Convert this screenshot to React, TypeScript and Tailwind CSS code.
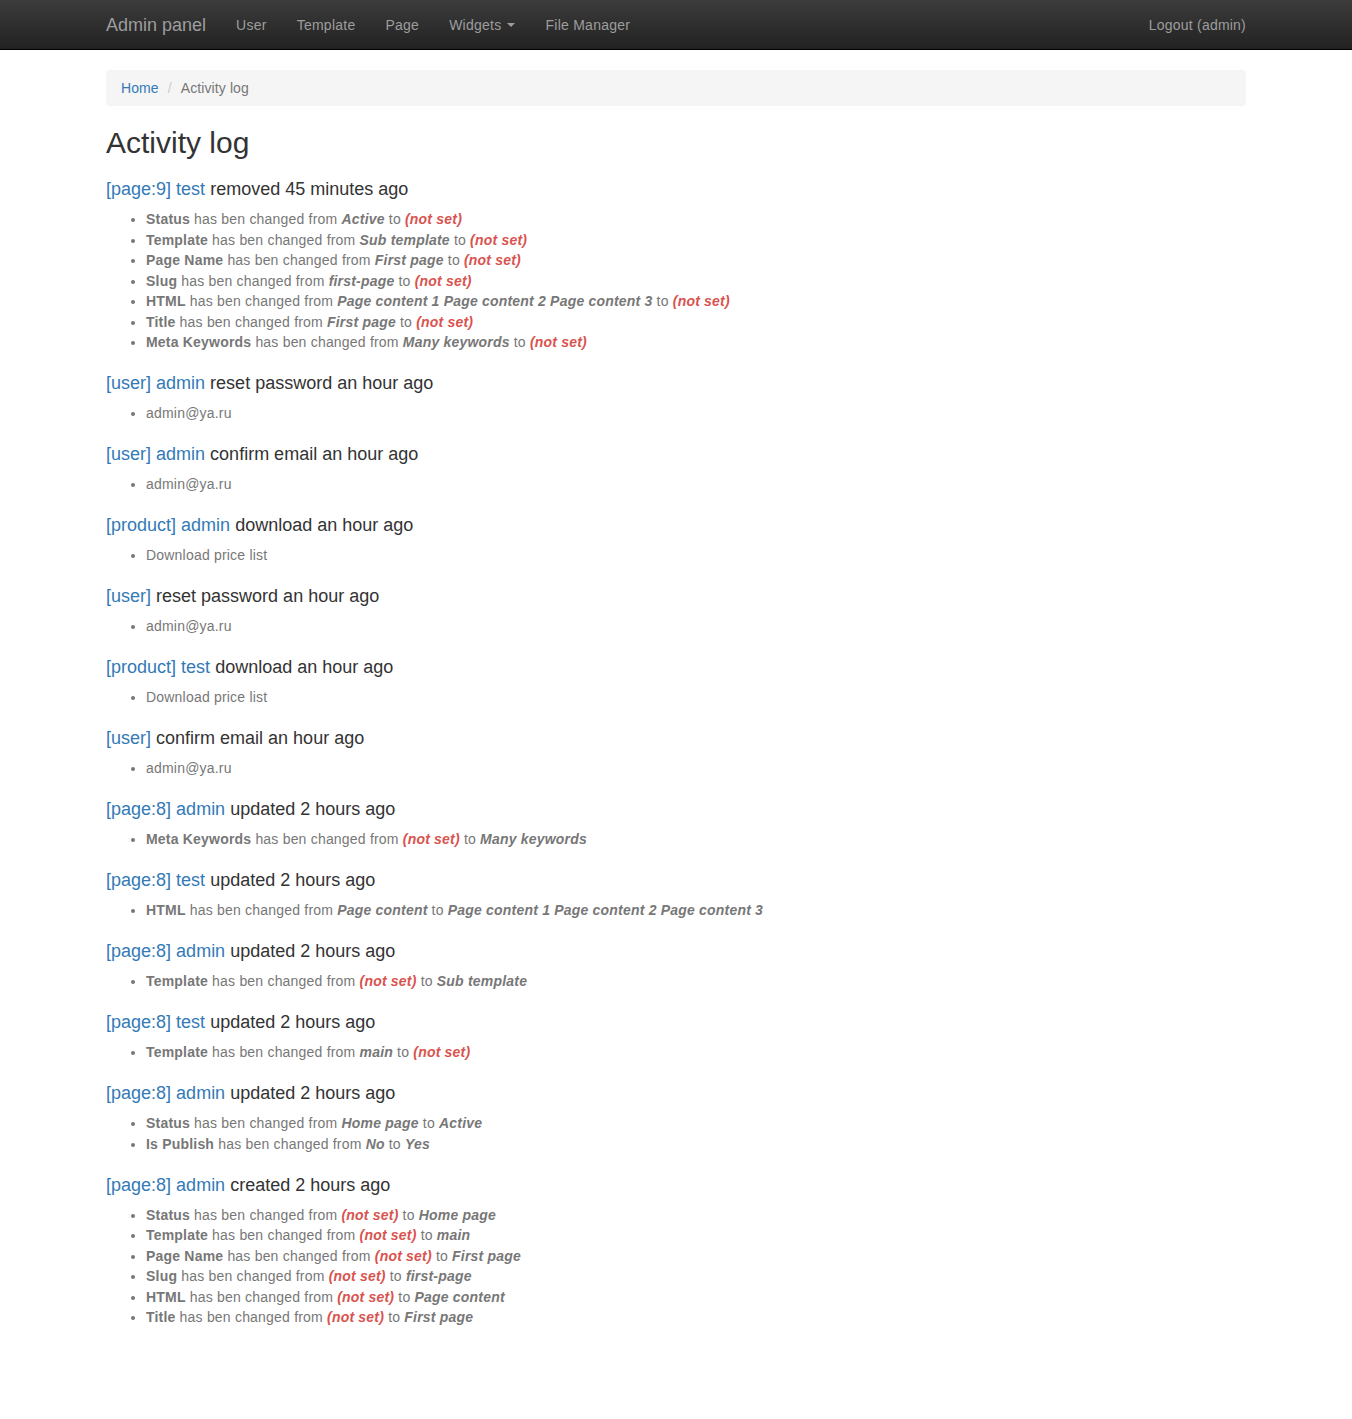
import React from "react"

type Change = { attr: string; from: string | null; to: string | null }
type Entry = { model: string; user?: string; action: string; changes?: Change[]; note?: string }

const entries: Entry[] = [
  {
    model: "page:9",
    user: "test",
    action: "removed 45 minutes ago",
    changes: [
      { attr: "Status", from: "Active", to: null },
      { attr: "Template", from: "Sub template", to: null },
      { attr: "Page Name", from: "First page", to: null },
      { attr: "Slug", from: "first-page", to: null },
      { attr: "HTML", from: "Page content 1 Page content 2 Page content 3", to: null },
      { attr: "Title", from: "First page", to: null },
      { attr: "Meta Keywords", from: "Many keywords", to: null },
    ],
  },
  { model: "user", user: "admin", action: "reset password an hour ago", note: "admin@ya.ru" },
  { model: "user", user: "admin", action: "confirm email an hour ago", note: "admin@ya.ru" },
  { model: "product", user: "admin", action: "download an hour ago", note: "Download price list" },
  { model: "user", action: "reset password an hour ago", note: "admin@ya.ru" },
  { model: "product", user: "test", action: "download an hour ago", note: "Download price list" },
  { model: "user", action: "confirm email an hour ago", note: "admin@ya.ru" },
  {
    model: "page:8",
    user: "admin",
    action: "updated 2 hours ago",
    changes: [{ attr: "Meta Keywords", from: null, to: "Many keywords" }],
  },
  {
    model: "page:8",
    user: "test",
    action: "updated 2 hours ago",
    changes: [{ attr: "HTML", from: "Page content", to: "Page content 1 Page content 2 Page content 3" }],
  },
  {
    model: "page:8",
    user: "admin",
    action: "updated 2 hours ago",
    changes: [{ attr: "Template", from: null, to: "Sub template" }],
  },
  {
    model: "page:8",
    user: "test",
    action: "updated 2 hours ago",
    changes: [{ attr: "Template", from: "main", to: null }],
  },
  {
    model: "page:8",
    user: "admin",
    action: "updated 2 hours ago",
    changes: [
      { attr: "Status", from: "Home page", to: "Active" },
      { attr: "Is Publish", from: "No", to: "Yes" },
    ],
  },
  {
    model: "page:8",
    user: "admin",
    action: "created 2 hours ago",
    changes: [
      { attr: "Status", from: null, to: "Home page" },
      { attr: "Template", from: null, to: "main" },
      { attr: "Page Name", from: null, to: "First page" },
      { attr: "Slug", from: null, to: "first-page" },
      { attr: "HTML", from: null, to: "Page content" },
      { attr: "Title", from: null, to: "First page" },
    ],
  },
]

function Value({ v }: { v: string | null }) {
  if (v === null) return <b className="italic text-[#d9534f]">(not set)</b>
  return <b className="italic">{v}</b>
}

function Navbar() {
  const links = ["User", "Template", "Page"]
  return (
    <header className="h-[50px] border-b border-black bg-gradient-to-b from-[#3c3c3c] to-[#222222]">
      <div className="mx-auto flex h-full w-[1170px] items-center justify-between px-[15px]">
        <div className="flex items-center">
          <a className="pr-[15px] text-[18px] text-[#9d9d9d]">Admin panel</a>
          {links.map((l) => (
            <a key={l} className="px-[15px] text-[14px] tracking-[0.25px] text-[#9d9d9d]">
              {l}
            </a>
          ))}
          <a className="flex items-center px-[15px] text-[14px] tracking-[0.25px] text-[#9d9d9d]">
            Widgets
            <span className="ml-[6px] mt-[1px] h-0 w-0 border-x-[4px] border-t-[4px] border-x-transparent border-t-[#9d9d9d]" />
          </a>
          <a className="px-[15px] text-[14px] tracking-[0.25px] text-[#9d9d9d]">File Manager</a>
        </div>
        <a className="text-[14px] tracking-[0.22px] text-[#9d9d9d]">Logout (admin)</a>
      </div>
    </header>
  )
}

export default function App() {
  return (
    <div className="min-h-[1419px] bg-white font-['Liberation_Sans',Arial,sans-serif] text-[14px] leading-[20px] text-[#333]">
      <Navbar />
      <div className="mx-auto w-[1170px] px-[15px] pb-[60px]">
        {/* Breadcrumb */}
        <ol className="mt-[20px] flex h-[36px] items-center rounded-[4px] bg-[#f5f5f5] px-[15px] tracking-[0.1px]">
          <li className="text-[#337ab7]">Home</li>
          <li className="pl-[9px] pr-[5px] text-[#ccc]">/{"\u00a0"}</li>
          <li className="text-[#777]">Activity log</li>
        </ol>

        <h1 className="mt-[20px] text-[30px] leading-[33px]">Activity log</h1>

        <div className="mt-[20px] flex flex-col gap-[20.5px]">
          {entries.map((e, i) => (
            <div key={i}>
              <h4 className="text-[18px] leading-[20px]">
                <a className="text-[#337ab7]">[{e.model}]</a>{" "}
                {e.user && (
                  <>
                    <a className="text-[#337ab7]">{e.user}</a>{" "}
                  </>
                )}
                {e.action}
              </h4>
              <ul className="mt-[10px] list-disc pl-[40px] tracking-[0.2px] text-[#777]">
                {e.note && <li className="leading-[20.5px]">{e.note}</li>}
                {e.changes?.map((c, j) => (
                  <li key={j} className="leading-[20.5px]">
                    <b>{c.attr}</b> has ben changed from <Value v={c.from} /> to <Value v={c.to} />
                  </li>
                ))}
              </ul>
            </div>
          ))}
        </div>
      </div>
    </div>
  )
}
